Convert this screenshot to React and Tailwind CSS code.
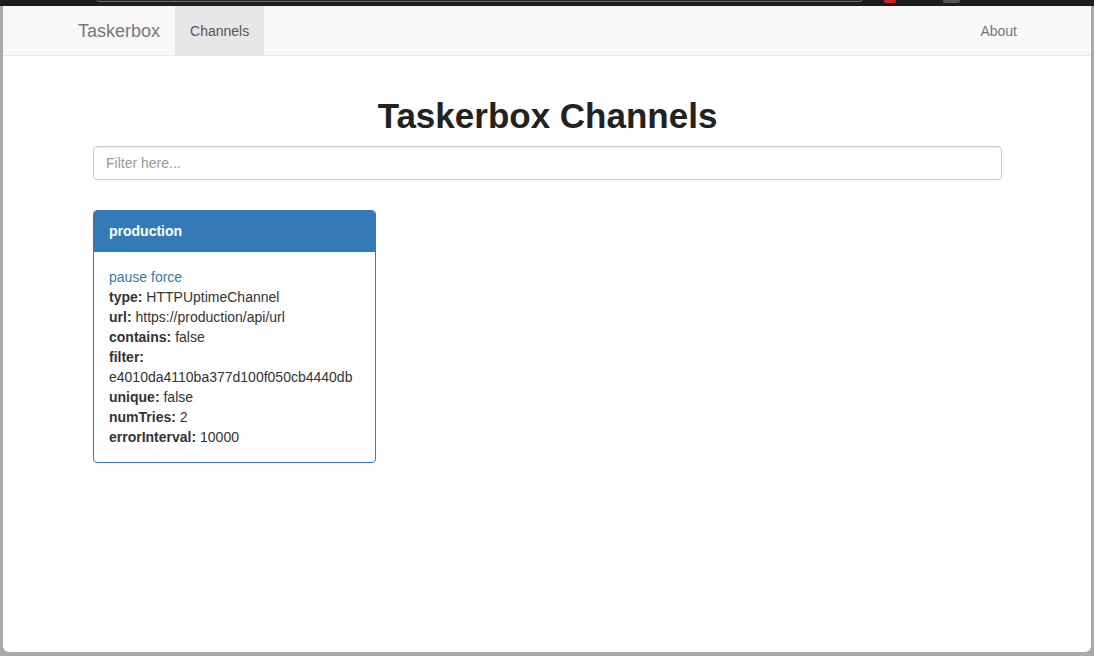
import React, { useState } from "react";

const CHANNEL = {
  name: "production",
  fields: [
    { key: "type", value: "HTTPUptimeChannel" },
    { key: "url", value: "https://production/api/url" },
    { key: "contains", value: "false" },
    { key: "filter", value: "e4010da4110ba377d100f050cb4440db", wrap: true },
    { key: "unique", value: "false" },
    { key: "numTries", value: "2" },
    { key: "errorInterval", value: "10000" },
  ],
};

function Navbar() {
  return (
    <div className="h-[50px] bg-[#f8f8f8] border-b border-[#e7e7e7] flex items-stretch pl-[60px] pr-[59px] text-[14px]">
      <a className="flex items-center px-[15px] pt-[1px] text-[18px] text-[#777]">Taskerbox</a>
      <a className="flex items-center px-[15px] pt-[1px] bg-[#e7e7e7] text-[#555]">Channels</a>
      <div className="flex-1" />
      <a className="flex items-center px-[15px] pt-[1px] text-[#777]">About</a>
    </div>
  );
}

function ChannelCard({ channel }) {
  return (
    <div className="w-[283px] rounded-[4px] border border-[#337ab7] bg-white overflow-hidden">
      <div className="h-[41px] bg-[#337ab7] text-white font-bold text-[14px] px-[15px] flex items-center">
        {channel.name}
      </div>
      <div className="px-[15px] py-[15px] text-[14px] leading-[20px] text-[#333]">
        <div className="text-[#337ab7]">pause force</div>
        {channel.fields.map((f) =>
          f.wrap ? (
            <div key={f.key}>
              <div><span className="font-bold">{f.key}:</span></div>
              <div>{f.value}</div>
            </div>
          ) : (
            <div key={f.key}>
              <span className="font-bold">{f.key}:</span> {f.value}
            </div>
          )
        )}
      </div>
    </div>
  );
}

export default function App() {
  const [filter, setFilter] = useState("");

  return (
    <div className="w-[1094px] h-[656px] bg-[#a9a9a9] overflow-hidden relative" style={{ fontFamily: '"Liberation Sans", Arial, sans-serif' }}>
      {/* browser chrome strip */}
      <div className="h-[6px] bg-[#1d1d1d] relative">
        <div className="absolute left-[96px] top-[-4px] w-[767px] h-[6px] rounded-[3px] border border-[#3f6fc0] bg-[#2a2a2a]" />
        <div className="absolute left-[884px] top-[-3px] w-[12px] h-[6px] rounded-[2px] bg-[#c0282d]" />
        <div className="absolute left-[943px] top-[-3px] w-[17px] h-[6px] rounded-[2px] bg-[#555]" />
      </div>
      <div className="ml-[3px] w-[1088px] h-[646px] bg-white rounded-b-[6px] overflow-hidden">
        <Navbar />
        <div className="w-[909px] ml-[90px] pt-[40px]">
          <h1 className="mb-[10px] text-center text-[35px] leading-[40px] font-bold text-[#222]">
            Taskerbox Channels
          </h1>
          <input
            value={filter}
            onChange={(e) => setFilter(e.target.value)}
            placeholder="Filter here..."
            className="w-full h-[34px] px-[12px] border border-[#ccc] rounded-[4px] text-[14px] text-[#555] placeholder:text-[#999] shadow-[inset_0_1px_1px_rgba(0,0,0,0.075)] outline-none"
          />
          <div className="mt-[30px]">
            <ChannelCard channel={CHANNEL} />
          </div>
        </div>
      </div>
    </div>
  );
}
